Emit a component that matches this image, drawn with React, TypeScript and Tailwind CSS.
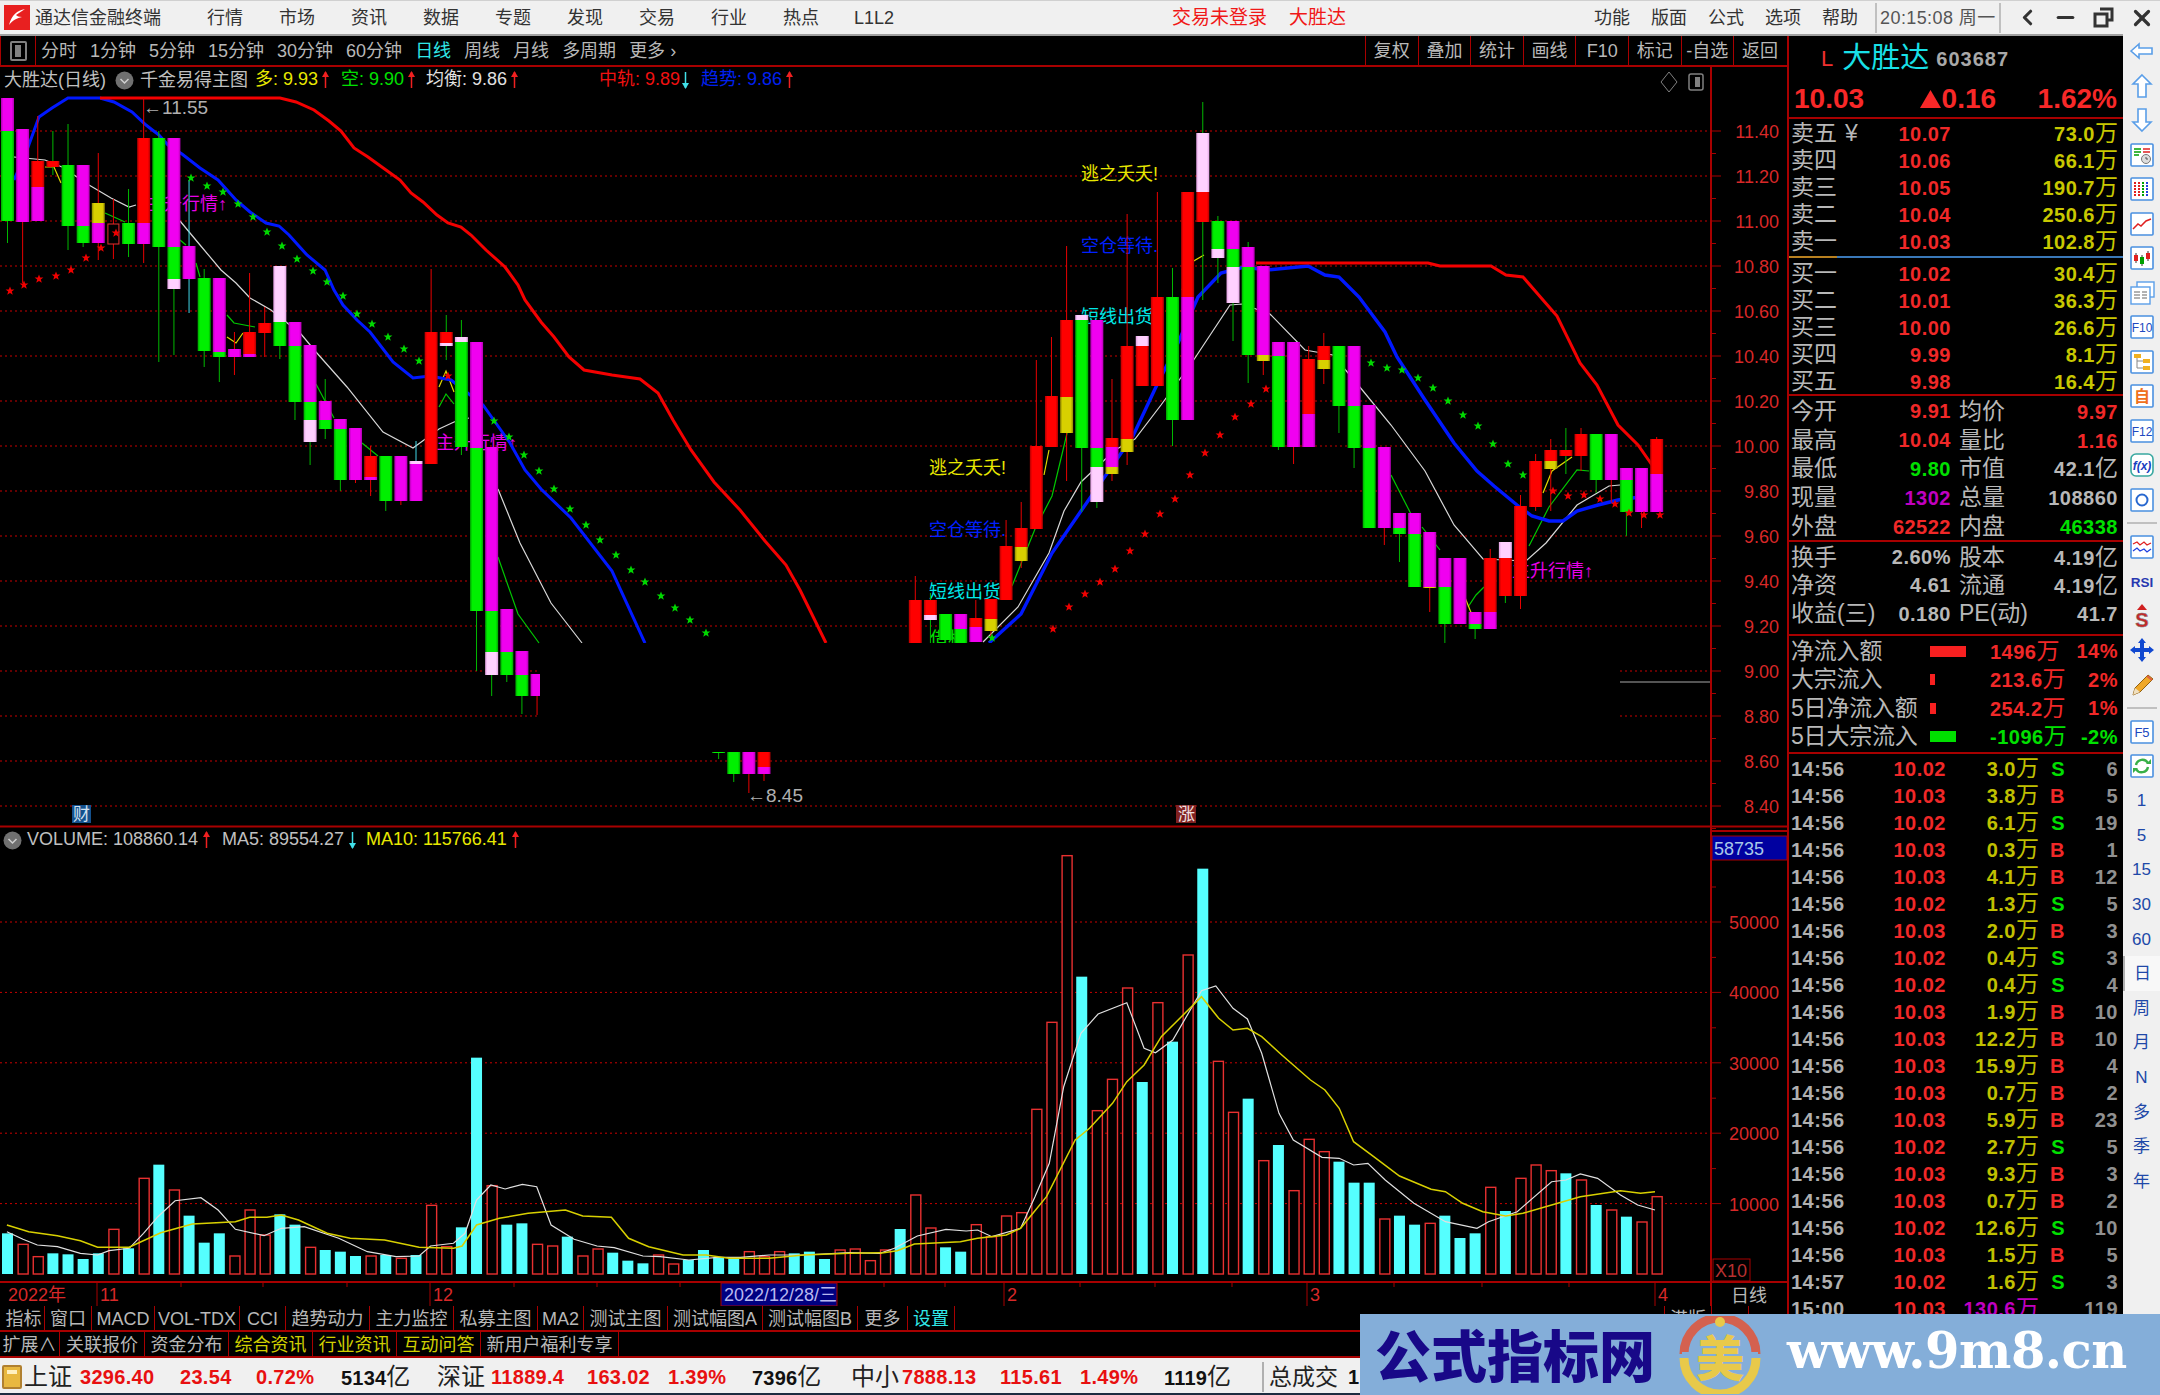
import { ChevronLeft, Minus, X } from 'lucide-react';
import type { ReactNode } from 'react';

const px = (i: number) => 7.5 + 15.13 * i;

// 蜡烛: [序号, 上影, 下影, 影线色, y0, 色, y1, 色, y2 ...]  坐标为整页像素
const K: (number | string)[][] = [
  [0, 98, 243, 'g', 98, 'm', 131, 'g', 221],
  [1, 129, 283, 'r', 129, 'm', 222],
  [2, 116, 221, 'r', 161, 'r', 187, 'm', 221],
  [3, 131, 175, 'g', 161, 'r', 167],
  [4, 124, 250, 'g', 165, 'g', 226],
  [5, 165, 247, 'g', 165, 'm', 226, 'g', 243],
  [6, 153, 260, 'r', 203, 'y', 223, 'm', 243],
  [7, 199, 259, 'r', 224, 'h', 244],
  [8, 189, 257, 'g', 223, 'g', 244],
  [9, 98, 263, 'r', 138, 'r', 223, 'm', 244],
  [10, 131, 362, 'g', 138, 'g', 247],
  [11, 138, 355, 'g', 138, 'm', 247, 'g', 279, 'p', 289],
  [12, 180, 313, 'c', 246, 'm', 279],
  [13, 269, 367, 'g', 278, 'g', 351],
  [14, 278, 382, 'g', 278, 'm', 352, 'g', 357],
  [15, 332, 375, 'r', 349, 'm', 357],
  [16, 273, 357, 'r', 332, 'r', 354, 'm', 357],
  [17, 307, 357, 'r', 323, 'r', 333],
  [18, 266, 359, 'g', 266, 'p', 322, 'g', 346],
  [19, 322, 420, 'g', 322, 'm', 346, 'g', 402],
  [20, 345, 465, 'g', 345, 'm', 402, 'g', 420, 'p', 442],
  [21, 379, 439, 'g', 401, 'm', 420, 'g', 429],
  [22, 419, 491, 'g', 419, 'm', 429, 'g', 480],
  [23, 428, 483, 'r', 428, 'm', 480],
  [24, 446, 496, 'r', 456, 'r', 477, 'm', 480],
  [25, 456, 511, 'g', 456, 'g', 501],
  [26, 456, 505, 'r', 456, 'm', 501],
  [27, 441, 501, 'c', 461, 'p', 464, 'm', 501],
  [28, 269, 464, 'r', 332, 'r', 464],
  [29, 315, 360, 'g', 332, 'r', 343, 'p', 346],
  [30, 320, 455, 'g', 337, 'p', 342, 'g', 447],
  [31, 342, 671, 'g', 342, 'm', 448, 'g', 611],
  [32, 447, 696, 'g', 447, 'm', 611, 'g', 652, 'p', 675],
  [33, 609, 682, 'g', 609, 'm', 652, 'g', 675],
  [34, 651, 714, 'g', 651, 'm', 675, 'g', 696],
  [35, 674, 715, 'r', 674, 'm', 696],
  [47, 752, 759, 'g', 752, 'g', 753],
  [48, 752, 782, 'g', 752, 'g', 774],
  [49, 752, 793, 'r', 752, 'm', 774],
  [50, 752, 781, 'r', 752, 'r', 767, 'm', 774],
  [60, 576, 660, 'r', 600, 'r', 660],
  [61, 593, 660, 'g', 600, 'r', 615, 'p', 620],
  [62, 614, 660, 'g', 614, 'g', 640],
  [63, 614, 660, 'g', 614, 'm', 629, 'g', 660],
  [64, 600, 642, 'r', 618, 'r', 627, 'm', 642],
  [65, 599, 639, 'r', 599, 'r', 619, 'y', 631],
  [66, 520, 600, 'r', 546, 'r', 600],
  [67, 502, 568, 'r', 528, 'r', 547, 'y', 561],
  [68, 360, 529, 'r', 446, 'r', 529],
  [69, 337, 447, 'r', 396, 'r', 447],
  [70, 246, 481, 'r', 320, 'r', 397, 'y', 433],
  [71, 315, 512, 'g', 315, 'p', 320, 'g', 448],
  [72, 320, 508, 'g', 320, 'm', 448, 'g', 467, 'p', 502],
  [73, 379, 481, 'r', 438, 'r', 447, 'm', 467, 'y', 474],
  [74, 214, 465, 'r', 346, 'r', 439, 'y', 452],
  [75, 336, 386, 'r', 336, 'p', 346, 'r', 386],
  [76, 192, 386, 'r', 297, 'r', 386],
  [77, 268, 446, 'g', 297, 'g', 420],
  [78, 192, 420, 'r', 192, 'r', 297, 'm', 420],
  [79, 102, 300, 'g', 133, 'p', 192, 'r', 222],
  [80, 216, 283, 'g', 221, 'g', 249, 'p', 258],
  [81, 221, 341, 'g', 221, 'm', 249, 'g', 267, 'p', 303],
  [82, 242, 383, 'g', 247, 'm', 267, 'g', 355],
  [83, 266, 375, 'r', 266, 'm', 355, 'y', 361],
  [84, 342, 450, 'g', 342, 'm', 356, 'g', 447],
  [85, 342, 464, 'r', 342, 'm', 447],
  [86, 346, 447, 'r', 359, 'r', 414, 'm', 447],
  [87, 333, 384, 'r', 346, 'r', 360, 'y', 369],
  [88, 346, 433, 'g', 346, 'g', 406],
  [89, 346, 468, 'g', 346, 'm', 406, 'g', 448],
  [90, 405, 528, 'g', 405, 'm', 448, 'g', 528],
  [91, 447, 545, 'r', 447, 'm', 528],
  [92, 513, 562, 'g', 513, 'm', 528, 'g', 534],
  [93, 513, 587, 'g', 513, 'm', 534, 'g', 587],
  [94, 532, 612, 'r', 532, 'm', 587, 'y', 588],
  [95, 558, 643, 'g', 558, 'm', 587, 'g', 624],
  [96, 558, 624, 'r', 558, 'm', 624],
  [97, 612, 639, 'g', 612, 'm', 624, 'g', 629],
  [98, 549, 629, 'r', 558, 'r', 612, 'm', 629],
  [99, 542, 603, 'g', 542, 'p', 558, 'r', 596],
  [100, 495, 609, 'r', 506, 'r', 596],
  [101, 454, 511, 'r', 461, 'r', 507],
  [102, 439, 511, 'r', 450, 'r', 461, 'y', 469],
  [103, 428, 474, 'g', 450, 'r', 456],
  [104, 428, 471, 'r', 434, 'r', 456],
  [105, 434, 493, 'g', 434, 'g', 480],
  [106, 434, 502, 'r', 434, 'm', 480],
  [107, 468, 536, 'g', 468, 'm', 480, 'g', 512],
  [108, 468, 528, 'r', 468, 'm', 512],
  [109, 437, 512, 'r', 439, 'r', 474, 'm', 512],
];

const FILL: Record<string, string> = { r: 'url(#gr)', g: 'url(#gg)', m: 'url(#gm)', p: 'url(#gp)', y: 'url(#gy)' };
const WICK: Record<string, string> = { r: '#e80000', g: '#00b800', c: '#40d8e8' };

const RED_A = '100,98 250,98 280,98 296,102 314,110 329,121 341,131 354,148 368,157 386,170 400,180 411,193 423,202 437,215 448,223 461,227 471,235 486,250 505,267 518,285 525,300 541,322 554,337 569,357 584,370 612,375 640,379 658,393 673,420 691,450 714,482 740,510 765,541 786,565 800,590 826,643';
const RED_B = '1256,263 1428,263 1440,266 1491,266 1506,275 1523,277 1543,300 1557,316 1580,363 1597,385 1618,425 1638,445 1652,465';
const BLUE_A = '14,180 27,150 39,117 52,108 68,98 100,98 114,102 132,112 146,125 159,135 168,145 182,154 200,168 218,180 236,200 250,212 266,223 279,226 289,235 307,255 325,270 334,290 343,305 357,320 370,332 393,362 413,378 430,376 451,380 483,405 510,443 525,470 541,489 571,518 612,571 645,643';
const BLUE_B = '989,643 1021,614 1052,553 1081,511 1133,436 1155,389 1178,343 1198,297 1221,273 1244,267 1267,270 1308,266 1325,275 1339,277 1359,297 1385,332 1397,357 1425,400 1454,443 1477,471 1494,486 1517,505 1532,516 1549,521 1563,521 1577,511 1598,505 1618,500 1640,497';
const WHITE = [
  '14,157 45,160 62,167 89,185 111,198 129,207 136,205',
  '180,221 200,245 221,270 236,283 250,298 271,310 301,334 316,352 347,387 383,432 413,448 439,429 454,422 469,418',
  '498,489 520,543 551,603 582,643',
  '983,642 1018,607 1049,553 1064,511 1081,482 1115,450 1135,439 1161,405 1193,361 1230,305 1242,304 1270,314 1305,350 1333,355 1359,386 1391,425 1425,471 1454,525 1483,559 1526,561 1546,543 1577,505 1609,486 1620,485',
];
const THIN_G = [
  '105,213 125,222', '180,240 186,245', '196,263 200,277', '227,315 234,323 255,327', '316,384 334,418', '362,443 378,456',
  '439,407 446,394 454,404', '498,557 518,614 539,643', '1012,586 1035,529 1052,496 1069,425', '1391,475 1411,514',
  '1422,527 1440,550', '1468,607 1476,595 1484,587', '1529,546 1549,507 1577,470 1589,471',
];
const THIN_Y = [
  '45,167 54,167 61,183', '227,337 236,343 243,333', '439,387 446,371 454,392', '1044,475 1049,450', '1543,493 1552,471 1572,457',
  '1182,290 1192,262 1204,255', '1462,590 1472,615',
];
const STAR_R = [[10, 291], [24, 285], [39, 279], [56, 276], [71, 270], [86, 258], [101, 248], [116, 233], [448, 376], [1053, 629], [1069, 607], [1085, 594], [1100, 582], [1115, 569], [1130, 551], [1145, 534], [1160, 514], [1175, 499], [1190, 475], [1205, 453], [1220, 435], [1235, 417], [1251, 404], [1266, 389], [1553, 491], [1568, 496], [1584, 495], [1600, 499], [1615, 504], [1629, 513], [1644, 515], [1660, 515]];
const STAR_G = [[191, 178], [207, 186], [223, 192], [238, 204], [253, 217], [267, 232], [282, 246], [297, 259], [313, 271], [327, 282], [343, 296], [357, 314], [372, 324], [388, 337], [404, 349], [419, 361], [494, 421], [509, 437], [524, 455], [539, 471], [554, 489], [570, 509], [586, 525], [600, 540], [616, 555], [631, 570], [645, 582], [661, 596], [675, 608], [690, 620], [706, 633], [992, 638], [1371, 363], [1387, 368], [1402, 370], [1418, 378], [1433, 388], [1448, 401], [1463, 415], [1478, 426], [1493, 444], [1508, 464], [1523, 475]];

// 成交量: 顶部y(放大图坐标, y = 820 + d/3), 奇偶颜色单独给
const VOL: [number, string][] = [
  [1240, 'c'], [1273, 'r'], [1310, 'r'], [1300, 'c'], [1303, 'c'], [1317, 'c'], [1300, 'c'], [1228, 'r'], [1285, 'c'], [1075, 'r'],
  [1034, 'c'], [1110, 'r'], [1187, 'c'], [1268, 'c'], [1240, 'c'], [1308, 'r'], [1170, 'r'], [1245, 'r'], [1183, 'c'], [1214, 'c'],
  [1282, 'r'], [1290, 'c'], [1295, 'c'], [1308, 'c'], [1308, 'r'], [1305, 'c'], [1315, 'r'], [1305, 'c'], [1156, 'r'], [1280, 'r'],
  [1222, 'c'], [713, 'c'], [1097, 'r'], [1214, 'c'], [1210, 'c'], [1273, 'r'], [1278, 'r'], [1250, 'c'], [1308, 'r'], [1287, 'r'],
  [1298, 'c'], [1322, 'c'], [1330, 'c'], [1305, 'r'], [1332, 'r'], [1320, 'c'], [1290, 'c'], [1312, 'c'], [1315, 'c'], [1295, 'r'],
  [1310, 'r'], [1295, 'r'], [1300, 'c'], [1295, 'c'], [1317, 'c'], [1290, 'r'], [1287, 'r'], [1322, 'r'], [1290, 'r'], [1227, 'c'],
  [1125, 'r'], [1224, 'r'], [1282, 'c'], [1295, 'c'], [1214, 'r'], [1250, 'r'], [1188, 'r'], [1178, 'r'], [868, 'r'], [607, 'r'],
  [107, 'r'], [470, 'c'], [872, 'r'], [778, 'r'], [504, 'r'], [786, 'c'], [548, 'r'], [665, 'c'], [405, 'r'], [146, 'c'],
  [724, 'r'], [877, 'r'], [836, 'c'], [1022, 'r'], [975, 'c'], [1112, 'r'], [958, 'r'], [995, 'r'], [1025, 'c'], [1088, 'c'],
  [1088, 'c'], [1197, 'r'], [1187, 'c'], [1214, 'c'], [1210, 'r'], [1187, 'c'], [1254, 'c'], [1240, 'c'], [1102, 'r'], [1173, 'c'],
  [1075, 'r'], [1035, 'r'], [1052, 'r'], [1060, 'c'], [1080, 'r'], [1155, 'c'], [1170, 'r'], [1190, 'c'], [1206, 'r'], [1130, 'r'],
];
const V_WHITE_L = [12, 1235, 40, 1258, 65, 1275, 100, 1280, 140, 1300, 170, 1305, 190, 1292, 225, 1285, 250, 1240, 275, 1190, 305, 1142, 350, 1133, 380, 1170, 410, 1228, 460, 1247, 490, 1225, 530, 1220, 590, 1255, 640, 1295, 690, 1310, 730, 1308, 750, 1278, 790, 1270, 810, 1240, 830, 1140, 855, 1095, 880, 1107, 910, 1093, 935, 1100, 960, 1215, 1000, 1258, 1040, 1278, 1070, 1283, 1120, 1308, 1150, 1310, 1200, 1320, 1250, 1312, 1290, 1312, 1340, 1305, 1400, 1305, 1480, 1298, 1530, 1300, 1533, 1300];
const V_YEL_L = [12, 1215, 50, 1235, 100, 1247, 140, 1262, 170, 1282, 225, 1282, 280, 1238, 335, 1212, 410, 1205, 435, 1192, 465, 1192, 490, 1185, 520, 1200, 570, 1240, 610, 1255, 670, 1260, 730, 1282, 790, 1285, 805, 1278, 830, 1215, 870, 1195, 920, 1180, 985, 1170, 1015, 1188, 1065, 1192, 1095, 1255, 1130, 1280, 1190, 1305, 1230, 1305, 1270, 1315, 1340, 1315, 1400, 1305, 1480, 1300, 1533, 1298];
const V_WHITE_R = [0, 1300, 25, 1285, 65, 1248, 115, 1228, 150, 1233, 170, 1230, 195, 1250, 245, 1225, 270, 1130, 295, 1030, 320, 800, 350, 640, 380, 582, 430, 548, 460, 685, 480, 698, 510, 660, 560, 512, 585, 498, 615, 565, 640, 597, 665, 700, 695, 880, 720, 960, 770, 1012, 800, 1015, 825, 1035, 850, 1030, 880, 1080, 930, 1150, 985, 1205, 1040, 1225, 1060, 1205, 1110, 1175, 1170, 1085, 1195, 1080, 1220, 1062, 1250, 1075, 1290, 1125, 1320, 1155, 1350, 1170];
const V_YEL_R = [0, 1300, 30, 1292, 60, 1272, 140, 1265, 170, 1255, 220, 1245, 245, 1225, 290, 1130, 340, 960, 365, 925, 405, 850, 430, 785, 460, 735, 490, 650, 560, 530, 590, 595, 615, 630, 640, 625, 665, 650, 700, 705, 750, 780, 775, 810, 800, 865, 825, 965, 860, 1010, 905, 1068, 960, 1108, 985, 1115, 1015, 1150, 1050, 1175, 1090, 1188, 1120, 1180, 1170, 1155, 1220, 1130, 1290, 1112, 1325, 1120, 1350, 1115];

const vPts = (a: number[], off: number) => {
  let s = '';
  for (let i = 0; i < a.length; i += 2) s += `${(a[i] / 1.742 + off).toFixed(1)},${(820 + a[i + 1] / 3).toFixed(1)} `;
  return s;
};

const PRICES = ['11.40', '11.20', '11.00', '10.80', '10.60', '10.40', '10.20', '10.00', '9.80', '9.60', '9.40', '9.20', '9.00', '8.80', '8.60', '8.40'];
const VOLS = ['50000', '40000', '30000', '20000', '10000'];
const DATE_TICKS = [181, 263, 347, 514, 597, 680, 884, 945, 1080, 1155, 1232, 1394, 1482, 1569];
const AXIS = '#a80000';
const LABEL = '#d82828';

function Chart() {
  return (
    <svg width="1787" height="1239" viewBox="0 67 1787 1239" className="block" fontFamily="'Liberation Sans','Noto Sans CJK SC',sans-serif" fontSize="18">
      <defs>
        {[['gr', '#b00000', '#ff0000'], ['gg', '#00a000', '#00f000'], ['gm', '#b000b0', '#f000f0'], ['gp', '#e0a0e0', '#ffd0ff'], ['gy', '#908800', '#d8d000']].map(([id, e, c]) => (
          <linearGradient key={id} id={id}>
            <stop offset="0" stopColor={e} />
            <stop offset="0.18" stopColor={c} />
            <stop offset="0.82" stopColor={c} />
            <stop offset="1" stopColor={e} />
          </linearGradient>
        ))}
        <path id="st" d="M0-4.5 1.2-1.4 4.4-1.4 1.8.6 2.8 3.8 0 1.9-2.8 3.8-1.8.6-4.4-1.4-1.2-1.4Z" />
      </defs>

      {/* 网格 */}
      {PRICES.map((_, n) => (
        <line key={n} x1="0" x2="1711" y1={131 + n * 45} y2={131 + n * 45} stroke="#c80000" strokeDasharray="2 3" />
      ))}
      {VOLS.map((_, n) => (
        <line key={n} x1="0" x2="1711" y1={922 + n * 70.4} y2={922 + n * 70.4} stroke="#c80000" strokeDasharray="2 3" />
      ))}

      {/* 文字信号 */}
      <text x="146" y="210" fill="#e800e8">主升行情↑</text>
      <text x="436" y="449" fill="#e800e8">主升行情↑</text>
      <text x="1512" y="577" fill="#e800e8">主升行情↑</text>
      <text x="1081" y="180" fill="#e8e800">逃之夭夭!</text>
      <text x="1081" y="252" fill="#0020ff">空仓等待.</text>
      <text x="1081" y="323" fill="#00e8e8">短线出货</text>
      <text x="929" y="474" fill="#e8e800">逃之夭夭!</text>
      <text x="929" y="536" fill="#0020ff">空仓等待.</text>
      <text x="929" y="598" fill="#00e8e8">短线出货</text>
      <text x="930" y="645" fill="#00e000">借机</text>

      {/* 均线 */}
      {WHITE.map((p) => <polyline key={p} points={p} fill="none" stroke="#d8d8d8" strokeWidth="1.2" />)}
      {THIN_G.map((p) => <polyline key={p} points={p} fill="none" stroke="#00c800" strokeWidth="1.2" />)}
      {THIN_Y.map((p) => <polyline key={p} points={p} fill="none" stroke="#e0d800" strokeWidth="1.2" />)}
      <polyline points={BLUE_A} fill="none" stroke="#0018ff" strokeWidth="3" />
      <polyline points={BLUE_B} fill="none" stroke="#0018ff" strokeWidth="3.4" />
      <polyline points={RED_A} fill="none" stroke="#f40000" strokeWidth="3" />
      <polyline points={RED_B} fill="none" stroke="#f40000" strokeWidth="3" />

      {/* K线 */}
      {K.map((k) => {
        const x = px(k[0] as number);
        const segs: ReactNode[] = [];
        for (let j = 4; j + 2 < k.length; j += 2) {
          const y0 = k[j] as number;
          const y1 = k[j + 2] as number;
          const c = k[j + 1] as string;
          segs.push(
            c === 'h'
              ? <rect key={j} x={x - 5.5} y={y0} width="11" height={y1 - y0} fill="#000" stroke="#e83030" />
              : <rect key={j} x={x - 6.5} y={y0} width="13" height={y1 - y0} fill={FILL[c]} />,
          );
        }
        return (
          <g key={k[0] as number}>
            <line x1={x} x2={x} y1={k[1] as number} y2={k[2] as number} stroke={WICK[k[3] as string]} />
            {segs}
          </g>
        );
      })}
      {STAR_R.map(([x, y]) => <use key={`${x}r`} href="#st" x={x} y={y} fill="#f00000" />)}
      {STAR_G.map(([x, y]) => <use key={`${x}g`} href="#st" x={x} y={y} fill="#00d800" />)}

      {/* 被遮掉的区域 */}
      <rect x="540" y="643" width="1080" height="102" fill="#000" />
      <line x1="1620" x2="1710" y1="682" y2="682" stroke="#a8a8a8" />

      <text x="143" y="114" fontSize="19" fill="#b0b0b0">←11.55</text>
      <text x="747" y="802" fontSize="19" fill="#b0b0b0">←8.45</text>
      <rect x="72" y="805" width="19" height="18" fill="#14508c" />
      <text x="73" y="820" fontSize="17" fill="#d0e0f0">财</text>
      <rect x="1176" y="805" width="20" height="18" fill="#802020" />
      <text x="1178" y="820" fontSize="17" fill="#f0e0e0">涨</text>
      <path d="M1669 72 1677 82 1669 92 1661 82Z" fill="none" stroke="#808080" />
      <rect x="1689" y="74" width="14" height="16" rx="2" fill="none" stroke="#808080" strokeWidth="1.5" />
      <rect x="1695" y="77" width="5" height="10" fill="#808080" />

      {/* 成交量 */}
      {VOL.map(([d, c], i) => {
        const x = px(i);
        const y = 820 + d / 3;
        return c === 'c'
          ? <rect key={i} x={x - 5.5} y={y} width="11" height={1274 - y} fill="#55ffff" />
          : <rect key={i} x={x - 4.5} y={y} width="10" height={1274 - y} fill="#000" stroke="#e83030" strokeWidth="1.4" />;
      })}
      <polyline points={vPts(V_WHITE_L, 0)} fill="none" stroke="#e0e0e0" strokeWidth="1.2" />
      <polyline points={vPts(V_WHITE_R, 880)} fill="none" stroke="#e0e0e0" strokeWidth="1.2" />
      <polyline points={vPts(V_YEL_L, 0)} fill="none" stroke="#d8d000" strokeWidth="1.5" />
      <polyline points={vPts(V_YEL_R, 880)} fill="none" stroke="#d8d000" strokeWidth="1.5" />

      {/* 坐标轴 */}
      <line x1="1711" x2="1711" y1="67" y2="1306" stroke={AXIS} strokeWidth="2" />
      <line x1="0" x2="1787" y1="826.5" y2="826.5" stroke={AXIS} strokeWidth="2" />
      <line x1="0" x2="1787" y1="1282" y2="1282" stroke={AXIS} strokeWidth="2" />
      {PRICES.map((p, n) => (
        <g key={p}>
          <line x1="1711" x2="1721" y1={131 + n * 45} y2={131 + n * 45} stroke={AXIS} />
          <line x1="1711" x2="1716" y1={153.5 + n * 45} y2={153.5 + n * 45} stroke={AXIS} />
          <text x="1779" y={138 + n * 45} textAnchor="end" fill={LABEL}>{p}</text>
        </g>
      ))}
      {VOLS.map((p, n) => (
        <g key={p}>
          <line x1="1711" x2="1721" y1={922 + n * 70.4} y2={922 + n * 70.4} stroke={AXIS} />
          <line x1="1711" x2="1716" y1={887 + n * 70.4} y2={887 + n * 70.4} stroke={AXIS} />
          <text x="1779" y={929 + n * 70.4} textAnchor="end" fill={LABEL}>{p}</text>
        </g>
      ))}
      <rect x="1712" y="830" width="75" height="2" fill={AXIS} />
      <rect x="1712" y="836" width="75" height="24" fill="#0000a0" stroke={AXIS} />
      <text x="1714" y="855" fill="#a8c8e8">58735</text>
      <rect x="1713" y="1259" width="37" height="22" fill="none" stroke={AXIS} />
      <text x="1715" y="1277" fill="#b83030">X10</text>

      {/* 日期轴 */}
      <text x="8" y="1301" fill={LABEL}>2022年</text>
      {[[97, '11'], [430, '12'], [1004, '2'], [1307, '3'], [1655, '4']].map(([x, t]) => (
        <g key={t as string}>
          <line x1={x as number} x2={x as number} y1="1282" y2="1306" stroke={AXIS} />
          <text x={(x as number) + 3} y="1301" fill={LABEL}>{t}</text>
        </g>
      ))}
      {DATE_TICKS.map((x) => <line key={x} x1={x} x2={x} y1="1282" y2="1287" stroke={AXIS} />)}
      <rect x="721" y="1283" width="116" height="23" fill="#000080" stroke={AXIS} />
      <text x="724" y="1301" fill="#b8b8f0">2022/12/28/三</text>
      <line x1="1711" x2="1711" y1="1282" y2="1306" stroke={AXIS} />
      <text x="1731" y="1302" fill="#b8b8b8">日线</text>
    </svg>
  );
}

function Arrow({ color, down }: { color: string; down?: boolean }) {
  return (
    <svg width="9" height="20" viewBox="0 0 9 20" className="shrink-0">
      <line x1="4.5" x2="4.5" y1="2" y2="18" stroke={color} strokeWidth="1.5" />
      <path d={down ? 'M1 13 8 13 4.5 19Z' : 'M1 7 8 7 4.5 1Z'} fill={color} />
    </svg>
  );
}

function Dot() {
  return (
    <svg width="19" height="19" viewBox="0 0 19 19" className="shrink-0">
      <circle cx="9.5" cy="9.5" r="9" fill="#707070" />
      <path d="M5.5 8 9.5 12 13.5 8" fill="none" stroke="#d0d0d0" strokeWidth="1.5" />
    </svg>
  );
}

const PERIODS = ['分时', '1分钟', '5分钟', '15分钟', '30分钟', '60分钟', '日线', '周线', '月线', '多周期', '更多'];
const TOOLS = ['复权', '叠加', '统计', '画线', 'F10', '标记', '-自选', '返回'];
const MENUS = ['行情', '市场', '资讯', '数据', '专题', '发现', '交易', '行业', '热点'];

function TitleBar() {
  return (
    <div className="h-[36px] bg-[#f0f0f0] border-t border-t-[#d0d0d0] border-b-2 border-b-[#a0a0a0] flex items-center text-[18px] text-[#333] shrink-0">
      <svg width="26" height="25" viewBox="0 0 26 25" className="ml-[4px] mr-[5px] shrink-0">
        <rect width="26" height="25" fill="#e82020" />
        <path d="M21 4C13 6 8 9 5 20 9 15 13 13 18 12 15 12 13 11 12 10 15 8 18 6 21 4Z" fill="#fff" />
      </svg>
      <span className="w-[172px]">通达信金融终端</span>
      <div className="flex gap-[36px]">
        {MENUS.map((m) => <span key={m}>{m}</span>)}
      </div>
      <span className="ml-[35px]">L1L2</span>
      <span className="ml-[278px] text-[#f01818] text-[19px]">交易未登录</span>
      <span className="ml-[22px] text-[#f01818] text-[19px]">大胜达</span>
      <div className="ml-[248px] flex gap-[21px]">
        <span>功能</span>
        <span>版面</span>
        <span>公式</span>
        <span>选项</span>
        <span>帮助</span>
      </div>
      <span className="ml-[17px] h-[30px] border-l-2 border-[#c0c0c0] pl-[3px] flex items-center w-[124px] text-[#555] text-[18px] tracking-[0.4px] whitespace-nowrap">20:15:08 周一</span>
      <span className="h-[30px] border-l-2 border-[#c0c0c0]" />
      <div className="flex items-center ml-[14px] gap-[13px]">
        <ChevronLeft size={25} strokeWidth={3} color="#333" />
        <Minus size={25} strokeWidth={3} color="#333" />
        <svg width="25" height="25" viewBox="0 0 25 25">
          <path d="M9 4H21V15H17M4 9H16V21H4Z" fill="none" stroke="#333" strokeWidth="3" />
        </svg>
        <X size={26} strokeWidth={3} color="#333" />
      </div>
    </div>
  );
}

function PeriodBar() {
  return (
    <div className="h-[31px] border-b-2 border-[#a80000] flex items-center text-[18px] text-[#b8b8b8] whitespace-nowrap">
      <div className="w-[36px] h-full border-x border-[#a80000] flex items-center justify-center shrink-0">
        <span className="w-[17px] h-[20px] border-2 border-[#808080] rounded-[2px] flex justify-center items-center">
          <span className="w-[6px] h-[12px] bg-[#808080]" />
        </span>
      </div>
      <div className="flex gap-[13px] ml-[5px] w-[1324px]">
        {PERIODS.map((p) => (
          <span key={p} className={p === '日线' ? 'text-[#30e8e8]' : ''}>
            {p}
            {p === '更多' ? ' ›' : ''}
          </span>
        ))}
      </div>
      {TOOLS.map((t) => (
        <span key={t} className="w-[52.6px] h-full border-l border-[#a80000] flex items-center justify-center">{t}</span>
      ))}
    </div>
  );
}

function Legend() {
  return (
    <div className="absolute left-0 top-0 h-[26px] flex items-center text-[18px] text-[#c0c0c0] whitespace-nowrap">
      <span className="ml-[4px] w-[111px]">大胜达(日线)</span>
      <Dot />
      <span className="ml-[6px] w-[115px]">千金易得主图</span>
      <span className="w-[86px] flex gap-[3px] text-[#e8e800]">多: 9.93<Arrow color="#f02020" /></span>
      <span className="w-[85px] flex gap-[3px] text-[#00e000]">空: 9.90<Arrow color="#f02020" /></span>
      <span className="w-[173px] flex gap-[3px] text-[#e0e0e0]">均衡: 9.86<Arrow color="#f02020" /></span>
      <span className="w-[102px] flex gap-[1px] text-[#f01010]">中轨: 9.89<Arrow color="#40e0e8" down /></span>
      <span className="flex gap-[3px] text-[#0020f0]">趋势: 9.86<Arrow color="#f02020" /></span>
    </div>
  );
}

function VolLegend() {
  return (
    <div className="absolute left-[3px] top-[761px] h-[24px] flex items-center text-[18px] text-[#c0c0c0] whitespace-nowrap">
      <Dot />
      <span className="ml-[5px] w-[195px] flex gap-[4px]">VOLUME: 108860.14<Arrow color="#f02020" /></span>
      <span className="w-[144px] flex gap-[4px]">MA5: 89554.27<Arrow color="#40e0e8" down /></span>
      <span className="flex gap-[4px] text-[#e8e800]">MA10: 115766.41<Arrow color="#f02020" /></span>
    </div>
  );
}

const TAB1: [string, number, string?][] = [
  ['指标', 42], ['窗口', 47], ['MACD', 63], ['VOL-TDX', 85], ['CCI', 46], ['趋势动力', 84], ['主力监控', 84], ['私募主图', 84], ['MA2', 46],
  ['测试主图', 84], ['测试幅图A', 95], ['测试幅图B', 95], ['更多', 50], ['设置', 47, 'text-[#30e8e8]'], ['', 710], ['港版', 47], ['', 37],
];
const TAB2: [string, number, string?][] = [
  ['扩展∧', 60], ['关联报价', 85], ['资金分布', 84], ['综合资讯', 84, 'text-[#d0d000]'], ['行业资讯', 84, 'text-[#d0d000]'], ['互动问答', 84, 'text-[#d0d000]'], ['新用户福利专享', 138],
];

function TabRow({ tabs, pad }: { tabs: [string, number, string?][]; pad: number }) {
  return (
    <div className="h-[26px] border-b-2 border-[#a80000] flex text-[18px] text-[#b8b8b8] whitespace-nowrap" style={{ paddingLeft: pad }}>
      {tabs.map(([t, w, c], i) => (
        <span key={i} style={{ width: w }} className={`border-r border-[#a80000] pt-[2px] flex items-center justify-center ${c ?? ''}`}>{t}</span>
      ))}
    </div>
  );
}

const NUM = 'font-bold text-[20px] tracking-[0.5px]';

function Unit({ v, cls }: { v: string; cls: string }) {
  const u = /[万亿]$/.test(v) ? v.slice(-1) : '';
  return (
    <span className={`${cls} whitespace-nowrap`}>
      <span className={NUM}>{u ? v.slice(0, -1) : v}</span>
      {u && <span className="text-[23px] font-normal">{u}</span>}
    </span>
  );
}

const ASKS: [string, string, string][] = [
  ['卖五', '10.07', '73.0万'], ['卖四', '10.06', '66.1万'], ['卖三', '10.05', '190.7万'], ['卖二', '10.04', '250.6万'], ['卖一', '10.03', '102.8万'],
];
const BIDS: [string, string, string][] = [
  ['买一', '10.02', '30.4万'], ['买二', '10.01', '36.3万'], ['买三', '10.00', '26.6万'], ['买四', '9.99', '8.1万'], ['买五', '9.98', '16.4万'],
];

function Ladder({ rows }: { rows: [string, string, string][] }) {
  return (
    <>
      {rows.map(([l, p, v]) => (
        <div key={l} className="h-[27.1px] flex items-center">
          <span className="w-[160px] text-[23px] text-[#b8b8b8] whitespace-nowrap">
            {l}
            {l === '卖五' && <span className="ml-[8px]">¥</span>}
          </span>
          <span className={`w-[0px] flex justify-end ${NUM} text-[#f02828]`}>{p}</span>
          <span className="flex-1 text-right"><Unit v={v} cls="text-[#c8c800]" /></span>
        </div>
      ))}
    </>
  );
}

const R = 'text-[#f02828]';
const G = 'text-[#00e000]';
const W = 'text-[#b8b8b8]';
const STATS1: [string, string, string, string, string, string][] = [
  ['今开', '9.91', R, '均价', '9.97', R],
  ['最高', '10.04', R, '量比', '1.16', R],
  ['最低', '9.80', G, '市值', '42.1亿', W],
  ['现量', '1302', 'text-[#c000c0]', '总量', '108860', W],
  ['外盘', '62522', R, '内盘', '46338', G],
];
const STATS2: [string, string, string, string, string, string][] = [
  ['换手', '2.60%', W, '股本', '4.19亿', W],
  ['净资', '4.61', W, '流通', '4.19亿', W],
  ['收益(三)', '0.180', W, 'PE(动)', '41.7', W],
];

function Stats({ rows, h }: { rows: [string, string, string, string, string, string][]; h: string }) {
  return (
    <>
      {rows.map(([a, b, c, d, e, f]) => (
        <div key={a} className={`${h} flex items-center text-[23px] text-[#b8b8b8] whitespace-nowrap`}>
          <span className="w-[100px]">{a}</span>
          <span className={`w-[60px] flex justify-end ${NUM} ${c}`}>{b}</span>
          <span className="ml-[8px]">{d}</span>
          <span className="flex-1 text-right"><Unit v={e} cls={f} /></span>
        </div>
      ))}
    </>
  );
}

const FLOW: [string, number, string, string, string][] = [
  ['净流入额', 36, '#f82020', '1496万', '14%'],
  ['大宗流入', 5, '#f82020', '213.6万', '2%'],
  ['5日净流入额', 6, '#f82020', '254.2万', '1%'],
  ['5日大宗流入', 26, '#00e000', '-1096万', '-2%'],
];

const TICKS: [string, string, string, string, string][] = [
  ['14:56', '10.02', '3.0万', 'S', '6'], ['14:56', '10.03', '3.8万', 'B', '5'], ['14:56', '10.02', '6.1万', 'S', '19'], ['14:56', '10.03', '0.3万', 'B', '1'],
  ['14:56', '10.03', '4.1万', 'B', '12'], ['14:56', '10.02', '1.3万', 'S', '5'], ['14:56', '10.03', '2.0万', 'B', '3'], ['14:56', '10.02', '0.4万', 'S', '3'],
  ['14:56', '10.02', '0.4万', 'S', '4'], ['14:56', '10.03', '1.9万', 'B', '10'], ['14:56', '10.03', '12.2万', 'B', '10'], ['14:56', '10.03', '15.9万', 'B', '4'],
  ['14:56', '10.03', '0.7万', 'B', '2'], ['14:56', '10.03', '5.9万', 'B', '23'], ['14:56', '10.02', '2.7万', 'S', '5'], ['14:56', '10.03', '9.3万', 'B', '3'],
  ['14:56', '10.03', '0.7万', 'B', '2'], ['14:56', '10.02', '12.6万', 'S', '10'], ['14:56', '10.03', '1.5万', 'B', '5'], ['14:57', '10.02', '1.6万', 'S', '3'],
  ['15:00', '10.03', '130.6万', '', '119'],
];

function SidePanel() {
  return (
    <div className="w-[336px] border-l-2 border-[#a80000] bg-black flex flex-col overflow-hidden pl-[2px] pr-[5px]">
      <div className="h-[45px] flex items-center whitespace-nowrap">
        <span className="ml-[30px] text-[22px] text-[#f03030]">L</span>
        <span className="ml-[9px] text-[29px] text-[#18e0e8] leading-none">大胜达</span>
        <span className={`ml-[7px] ${NUM} text-[#a8a8a8] tracking-[1px]`}>603687</span>
      </div>
      <div className="h-[38px] -mr-[5px] -ml-[2px] pl-[5px] pr-[6px] flex items-center justify-between border-b-2 border-[#a80000] font-bold text-[28px] text-[#f82828]">
        <span>10.03</span>
        <span className="ml-[14px] flex items-center gap-[1px]">
          <svg width="21" height="18" viewBox="0 0 21 18"><path d="M10.500 0 21 18H0Z" fill="#f82828" /></svg>
          0.16
        </span>
        <span>1.62%</span>
      </div>
      <div className="h-[137px] pt-[1px]"><Ladder rows={ASKS} /></div>
      <div className="h-[2px] -ml-[2px] -mr-[5px] bg-[#3a78b8] shrink-0"><div className="w-[48px] h-full bg-[#b88020]" /></div>
      <div className="h-[137px] pt-[2px] -mb-[1px]"><Ladder rows={BIDS} /></div>
      <div className="h-[146px] pt-[1px] -mx-[2px] px-[2px] border-t-2 border-[#a80000] -mr-[5px] pr-[5px]"><Stats rows={STATS1} h="h-[28.8px]" /></div>
      <div className="h-[94px] pt-[1px] -ml-[2px] pl-[2px] border-t-2 border-[#a80000] -mr-[5px] pr-[5px]"><Stats rows={STATS2} h="h-[28.3px]" /></div>
      <div className="h-[118px] pt-[1px] -ml-[2px] pl-[2px] border-t-2 border-[#a80000] -mr-[5px] pr-[5px]">
        {FLOW.map(([l, w, c, v, p]) => (
          <div key={l} className="h-[28.5px] flex items-center text-[23px] text-[#b8b8b8] whitespace-nowrap">
            <span className="w-[139px] tracking-[-0.2px]">{l}</span>
            <span className="w-[60px] flex"><span className="h-[11px]" style={{ width: w, background: c }} /></span>
            <span className="w-[69px] text-right"><Unit v={v} cls={v[0] === '-' ? G : R} /></span>
            <span className={`flex-1 text-right ${NUM} ${v[0] === '-' ? G : R}`}>{p}</span>
          </div>
        ))}
      </div>
      <div className="-ml-[2px] pl-[2px] -mr-[5px] pr-[5px] border-t-2 border-[#a80000] pt-[1px]">
        {TICKS.map(([t, p, v, d, n], i) => (
          <div key={i} className="h-[27px] flex items-center whitespace-nowrap">
            <span className={`w-[60px] ${NUM} text-[#b0b0b0]`}>{t}</span>
            <span className={`w-[95px] text-right ${NUM} text-[#f02828]`}>{p}</span>
            <span className="w-[93px] text-right"><Unit v={v} cls={d ? 'text-[#c0c000]' : 'text-[#c000c0]'} /></span>
            <span className={`w-[26px] text-right ${NUM} ${d === 'S' ? G : R}`}>{d}</span>
            <span className={`flex-1 text-right ${NUM} text-[#909090]`}>{n}</span>
          </div>
        ))}
      </div>
    </div>
  );
}

function Box({ children }: { children: ReactNode }) {
  return (
    <svg width="24" height="24" viewBox="0 0 24 24" fontFamily="'Liberation Sans',sans-serif">
      <rect x="1" y="1" width="22" height="22" rx="1" fill="#fff" stroke="#4a90e0" strokeWidth="1.6" />
      {children}
    </svg>
  );
}

const Plain = ({ children }: { children: ReactNode }) => (
  <svg width="26" height="26" viewBox="0 0 26 26" fontFamily="'Liberation Sans',sans-serif">{children}</svg>
);

const arrow = { fill: '#fff', stroke: '#5a9ee8', strokeWidth: 1.6 };
const SIDE_ICONS: ReactNode[] = [
  <Plain key="l"><path d="M2 13 10 6V10H23V16H10V20Z" {...arrow} /></Plain>,
  <Plain key="u"><path d="M13 2 22 11H17V24H9V11H4Z" {...arrow} /></Plain>,
  <Plain key="d"><path d="M13 24 22 15H17V2H9V15H4Z" {...arrow} /></Plain>,
  <Box key="t1"><path d="M4 6H11M4 9H11M4 12H9" stroke="#00a000" strokeWidth="1.3" /><path d="M13 6H20M13 9H20" stroke="#e02020" strokeWidth="1.3" /><circle cx="16" cy="16" r="4.500" fill="#ddd" stroke="#777" /><path d="M16 14V16H18" stroke="#555" fill="none" /></Box>,
  <Box key="t2"><path d="M5 5V19M9 5V19" stroke="#e02020" strokeWidth="2" strokeDasharray="2 1" /><path d="M13 5V19" stroke="#00a000" strokeWidth="2" strokeDasharray="2 1" /><path d="M17 5V19" stroke="#2040e0" strokeWidth="2" strokeDasharray="2 1" /></Box>,
  <Box key="t3"><path d="M3 17 8 12 11 14 16 9 21 7" fill="none" stroke="#e02020" strokeWidth="1.5" /></Box>,
  <Box key="t4"><path d="M6 7V17M18 5V15M12 9V20" stroke="#333" /><rect x="4" y="9" width="4" height="6" fill="#e02020" /><rect x="10" y="11" width="4" height="7" fill="#00a000" /><rect x="16" y="7" width="4" height="6" fill="#e02020" /></Box>,
  <Plain key="t5"><rect x="8" y="2" width="17" height="15" fill="#fff" stroke="#5a9ee8" strokeWidth="1.4" /><rect x="2" y="7" width="19" height="17" fill="#fff" stroke="#5a9ee8" strokeWidth="1.4" /><path d="M5 12H11M5 15H11M5 18H11M13 12H18M13 15H18M13 18H18" stroke="#666" /></Plain>,
  <Box key="f10"><text x="12" y="16.500" fontSize="12" textAnchor="middle" fill="#2048c0">F10</text></Box>,
  <Box key="tr"><path d="M7 5V18H13M7 11H13" stroke="#888" fill="none" /><rect x="4" y="4" width="7" height="4" fill="#f0b020" /><rect x="13" y="9" width="7" height="4" fill="#f0b020" /><rect x="13" y="16" width="7" height="4" fill="#f0b020" /></Box>,
  <Box key="zi"><text x="12" y="18" fontSize="16" fontWeight="bold" textAnchor="middle" fill="#f07020" fontFamily="'Noto Sans CJK SC'">自</text></Box>,
  <Box key="f12"><text x="12" y="16.500" fontSize="12" textAnchor="middle" fill="#2048c0">F12</text></Box>,
  <Plain key="fx"><rect x="2" y="2" width="22" height="22" rx="5" fill="#fff" stroke="#38a8a0" strokeWidth="1.6" /><text x="13" y="18" fontSize="12" textAnchor="middle" fontStyle="italic" fontWeight="bold" fill="#1840c0">f(x)</text></Plain>,
  <Box key="o"><circle cx="12" cy="12" r="5.500" fill="none" stroke="#2868d0" strokeWidth="2" /></Box>,
  'sep',
  <Box key="w"><path d="M3 9 7 7 10 10 14 7 17 10 21 8" fill="none" stroke="#e02020" strokeWidth="1.3" /><path d="M3 16 7 13 10 16 14 14 17 17 21 14" fill="none" stroke="#2040e0" strokeWidth="1.3" /></Box>,
  <Plain key="rsi"><text x="13" y="18.500" fontSize="13.500" fontWeight="bold" textAnchor="middle" fill="#2838b0">RSI</text></Plain>,
  <Plain key="s"><path d="M13 1 8 7H18Z" fill="#d02020" /><text x="13" y="24" fontSize="20" fontWeight="bold" textAnchor="middle" fill="#c82828" stroke="#808080" strokeWidth="0.5">S</text></Plain>,
  <Plain key="mv"><path d="M13 1 17 6H15V11H20V9L25 13 20 17V15H15V20H17L13 25 9 20H11V15H6V17L1 13 6 9V11H11V6H9Z" fill="#1048d0" /></Plain>,
  <Plain key="pen"><path d="M4 23 6 16 19 3 24 7 11 20Z" fill="#f0a828" stroke="#906010" /><path d="M4 23 6 16 11 20Z" fill="#f0e0c0" /><path d="M18 4 23 8" stroke="#e06040" strokeWidth="2" /></Plain>,
  'sep',
  <Box key="f5"><text x="12" y="16.500" fontSize="13" textAnchor="middle" fill="#2048c0">F5</text></Box>,
  <Box key="rf"><path d="M6 11A6.500 6.500 0 0 1 18 9" fill="none" stroke="#38b048" strokeWidth="2.4" /><path d="M18 13A6.500 6.500 0 0 1 6 15" fill="none" stroke="#38b048" strokeWidth="2.4" /><path d="M16 10H21V5Z M8 14H3V19Z" fill="#38b048" /></Box>,
];
const SIDE_TEXT = ['1', '5', '15', '30', '60', '日', '周', '月', 'N', '多', '季', '年'];

function SideTools() {
  return (
    <div className="w-[37px] bg-[#f0f0f0] flex flex-col items-center overflow-hidden -mt-[2px]">
      {SIDE_ICONS.map((ic, i) =>
        ic === 'sep' ? (
          <div key={i} className="h-[12.5px] w-full flex items-center justify-center shrink-0">
            <span className="w-[30px] h-[2px] bg-[#c0c0c0]" />
          </div>
        ) : (
          <div key={i} className="h-[34.5px] w-full flex items-center justify-center shrink-0">{ic}</div>
        ),
      )}
      {SIDE_TEXT.map((t) => (
        <div key={t} className={`h-[34.6px] w-full flex items-center justify-center text-[17px] text-[#2048a8] shrink-0 ${t === '日' ? 'bg-[#f8f8f8] border-l-2 border-[#b0b0b0]' : ''}`}>{t}</div>
      ))}
    </div>
  );
}

function StatusBar() {
  const n = 'font-bold text-[20px] text-[#e81010] tracking-[0.3px]';
  const b = 'font-bold text-[20px] text-[#111] tracking-[0.2px]';
  const c = 'text-[24px] text-[#222]';
  const Yi = ({ v, w }: { v: string; w: string }) => (
    <span className={w}><span className={b}>{v}</span><span className={c}>亿</span></span>
  );
  return (
    <div className="h-[37px] bg-[#f0f0f0] flex items-center whitespace-nowrap border-b-2 border-b-[#1c2c40] pt-[3px]">
      <span className="w-[24px] flex justify-center">
        <span className="w-[20px] h-[24px] bg-[#e8b840] border-2 border-[#b08030] rounded-[2px]"><span className="block m-[3px] h-[4px] bg-[#fff0c0]" /></span>
      </span>
      <span className={`w-[56px] ${c}`}>上证</span>
      <span className={`w-[100px] ${n}`}>3296.40</span>
      <span className={`w-[76px] ${n}`}>23.54</span>
      <span className={`w-[85px] ${n}`}>0.72%</span>
      <Yi v="5134" w="w-[96px]" />
      <span className={`w-[54px] ${c}`}>深证</span>
      <span className={`w-[96px] ${n}`}>11889.4</span>
      <span className={`w-[81px] ${n}`}>163.02</span>
      <span className={`w-[84px] ${n}`}>1.39%</span>
      <Yi v="7396" w="w-[99px]" />
      <span className={`w-[51px] ${c}`}>中小</span>
      <span className={`w-[98px] ${n}`}>7888.13</span>
      <span className={`w-[80px] ${n}`}>115.61</span>
      <span className={`w-[84px] ${n}`}>1.49%</span>
      <Yi v="1119" w="w-[98px]" />
      <span className="h-[30px] border-l-2 border-[#b0b0b0] pl-[5px] w-[86px] flex items-center text-[23px] text-[#222]">总成交</span>
      <span className={b}>1</span>
    </div>
  );
}

function Watermark() {
  return (
    <div className="absolute left-[1360px] top-[1314px] w-[800px] h-[81px] bg-[#84aed9] flex items-center whitespace-nowrap">
      <span className="ml-[15px] mb-[4px] w-[303px] text-[56px] leading-none font-black text-[#180888] font-['Noto_Sans_CJK_SC',sans-serif]">公式指标网</span>
      <svg width="84" height="78" viewBox="0 0 84 78" className="shrink-0" fontFamily="'Noto Sans CJK SC',sans-serif">
        <path d="M6 38A36 36 0 0 1 78 38" fill="none" stroke="#d4614f" strokeWidth="9" />
        <path d="M6 42A36 36 0 0 0 78 42" fill="none" stroke="#e8c94a" strokeWidth="9" />
        <rect x="4" y="36" width="10" height="5" fill="#84aed9" />
        <rect x="70" y="36" width="10" height="5" fill="#84aed9" />
        <circle cx="42" cy="6" r="5" fill="#e8c94a" />
        <text x="42" y="60" fontSize="48" fontWeight="900" textAnchor="middle" fill="#e8c94a">美</text>
      </svg>
      <span className="ml-[25px] mb-[5px] text-[49.5px] leading-none font-bold text-white tracking-[-0.5px] font-['DejaVu_Serif',serif]">www.9m8.cn</span>
    </div>
  );
}

export default function App() {
  return (
    <div className="relative w-[2160px] h-[1395px] overflow-hidden bg-black font-['Liberation_Sans','Noto_Sans_CJK_SC',sans-serif] leading-none">
      <TitleBar />
      <div className="flex h-[1322px]">
        <div className="w-[1787px] flex flex-col shrink-0">
          <PeriodBar />
          <div className="relative h-[1239px]">
            <Chart />
            <Legend />
            <VolLegend />
          </div>
          <TabRow tabs={TAB1} pad={3} />
          <TabRow tabs={TAB2} pad={0} />
        </div>
        <SidePanel />
        <SideTools />
      </div>
      <StatusBar />
      <Watermark />
    </div>
  );
}
